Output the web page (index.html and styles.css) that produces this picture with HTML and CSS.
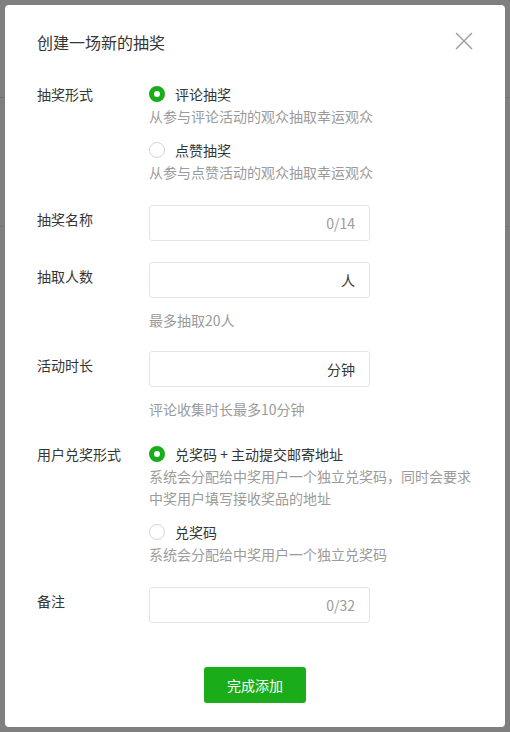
FILE: index.html
```html
<!DOCTYPE html>
<html lang="zh-CN">
<head>
<meta charset="utf-8">
<title>创建一场新的抽奖</title>
<link rel="stylesheet" href="styles.css">
</head>
<body>
<div class="dialog">
  <h2 class="dialog-title">创建一场新的抽奖</h2>
  <button class="close" type="button" aria-label="关闭">
    <svg width="18" height="18" viewBox="0 0 18 18"><path d="M1 1L17 17M17 1L1 17" stroke="#9b9b9b" stroke-width="1.4" fill="none"/></svg>
  </button>
  <div class="form">
    <div class="row">
      <div class="label">抽奖形式</div>
      <div class="control">
        <div class="option">
          <div class="radio-line"><span class="radio checked"></span><span class="radio-text">评论抽奖</span></div>
          <div class="desc">从参与评论活动的观众抽取幸运观众</div>
        </div>
        <div class="option">
          <div class="radio-line"><span class="radio"></span><span class="radio-text">点赞抽奖</span></div>
          <div class="desc">从参与点赞活动的观众抽取幸运观众</div>
        </div>
      </div>
    </div>
    <div class="row gap22">
      <div class="label label-input">抽奖名称</div>
      <div class="control">
        <div class="field"><input class="field-input" type="text"><span class="suffix muted">0/14</span></div>
      </div>
    </div>
    <div class="row gap21">
      <div class="label label-input">抽取人数</div>
      <div class="control">
        <div class="field"><input class="field-input" type="text"><span class="suffix">人</span></div>
        <div class="hint">最多抽取20人</div>
      </div>
    </div>
    <div class="row gap20">
      <div class="label label-input">活动时长</div>
      <div class="control">
        <div class="field"><input class="field-input" type="text"><span class="suffix">分钟</span></div>
        <div class="hint">评论收集时长最多10分钟</div>
      </div>
    </div>
    <div class="row gap23">
      <div class="label">用户兑奖形式</div>
      <div class="control">
        <div class="option">
          <div class="radio-line"><span class="radio checked"></span><span class="radio-text">兑奖码 + 主动提交邮寄地址</span></div>
          <div class="desc">系统会分配给中奖用户一个独立兑奖码，同时会要求中奖用户填写接收奖品的地址</div>
        </div>
        <div class="option">
          <div class="radio-line"><span class="radio"></span><span class="radio-text">兑奖码</span></div>
          <div class="desc">系统会分配给中奖用户一个独立兑奖码</div>
        </div>
      </div>
    </div>
    <div class="row gap22">
      <div class="label label-input">备注</div>
      <div class="control">
        <div class="field"><input class="field-input" type="text"><span class="suffix muted">0/32</span></div>
      </div>
    </div>
  </div>
  <div class="actions">
    <button class="btn-primary" type="button">完成添加</button>
  </div>
</div>
</body>
</html>
```
FILE: styles.css
```css
* { box-sizing: border-box; }
html, body { margin: 0; padding: 0; }
body {
  width: 510px;
  height: 732px;
  overflow: hidden;
  padding: 5px;
  font-family: "Noto Sans CJK SC", "Noto Sans", sans-serif;
  color: #353535;
  background-color: #7f7f7f;
  background-image:
    linear-gradient(#737373, #737373),
    linear-gradient(#757575, #757575);
  background-size: 100% 1px, 100% 1px;
  background-position: 0 97px, 0 226px;
  background-repeat: no-repeat;
}
.dialog {
  position: relative;
  width: 500px;
  background: #fff;
  border-radius: 4px;
  padding: 25px 32px 24px 32px;
}
.dialog-title {
  margin: 0;
  font-size: 16px;
  font-weight: normal;
  line-height: 24px;
  color: #353535;
}
.close {
  position: absolute;
  top: 27px;
  right: 32px;
  width: 18px;
  height: 18px;
  padding: 0;
  border: 0;
  background: none;
  cursor: pointer;
}
.close svg { display: block; }
.form {
  margin-top: 29px;
  display: flex;
  flex-direction: column;
}
.row {
  display: flex;
  font-size: 14px;
  line-height: 22px;
}
.gap20 { margin-top: 20px; }
.gap21 { margin-top: 21px; }
.gap22 { margin-top: 22px; }
.gap23 { margin-top: 23px; }
.label {
  width: 112px;
  flex: none;
  color: #353535;
}
.label-input { padding-top: 3px; }
.control {
  flex: 1;
  min-width: 0;
  display: flex;
  flex-direction: column;
}
.option + .option { margin-top: 12px; }
.radio-line {
  display: flex;
  align-items: center;
  gap: 10px;
}
.radio {
  width: 16px;
  height: 16px;
  border-radius: 50%;
  border: 1px solid #d6d6d6;
  background: #fff;
  flex: none;
}
.radio.checked {
  border: 5px solid #1aad19;
}
.radio-text { color: #353535; }
.desc, .hint { color: #9b9b9b; }
.hint { margin-top: 11px; }
.field {
  width: 221px;
  height: 36px;
  border: 1px solid #e4e4e4;
  border-radius: 3px;
  display: flex;
  align-items: center;
  padding: 0 14px 0 10px;
}
.field-input {
  flex: 1;
  min-width: 0;
  border: 0;
  outline: none;
  background: transparent;
  font: inherit;
  padding: 0;
}
.suffix { color: #353535; }
.suffix.muted { color: #9b9b9b; }
.actions {
  margin-top: 44px;
  display: flex;
  justify-content: center;
}
.btn-primary {
  width: 102px;
  height: 36px;
  border: 0;
  border-radius: 3px;
  background: #1aad19;
  color: #fff;
  font-family: "Noto Sans CJK SC", "Noto Sans", sans-serif;
  font-size: 14px;
  padding: 0;
  cursor: pointer;
}
```
